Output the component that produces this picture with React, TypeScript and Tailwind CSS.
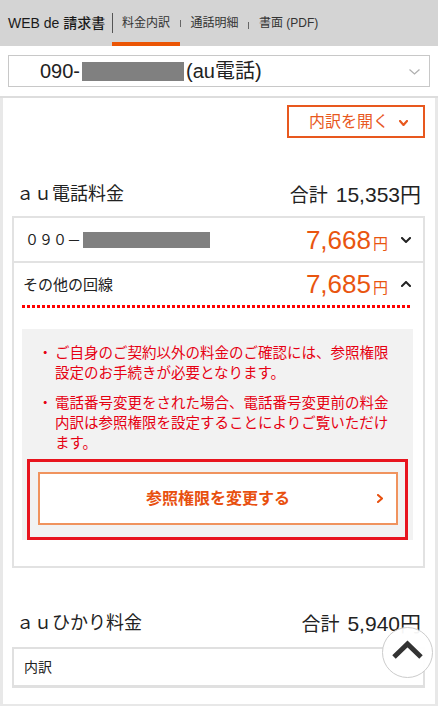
import React from "react";

function Chevron({ dir, className, color, w = 10, h = 6, sw = 2 }: { dir: "down" | "up" | "right"; className?: string; color: string; w?: number; h?: number; sw?: number }) {
  let d = "";
  if (dir === "down") d = `M1 1 L${w / 2} ${h - 1} L${w - 1} 1`;
  if (dir === "up") d = `M1 ${h - 1} L${w / 2} 1 L${w - 1} ${h - 1}`;
  if (dir === "right") d = `M1 1 L${w - 1} ${h / 2} L1 ${h - 1}`;
  return (
    <svg width={w} height={h} viewBox={`0 0 ${w} ${h}`} className={className}>
      <path d={d} fill="none" stroke={color} strokeWidth={sw} strokeLinecap="square" strokeLinejoin="miter" />
    </svg>
  );
}

function Total({ amount }: { amount: string }) {
  return (
    <span className="flex items-baseline leading-none">
      <span className="text-[19px]">合計</span>
      <span className="ml-[8px] text-[21px]">{amount}</span>
      <span className="text-[21px]">円</span>
    </span>
  );
}

export default function App() {
  return (
    <div className="relative h-[706px] w-[438px] overflow-hidden bg-white font-['Liberation_Sans','Noto_Sans_CJK_JP',sans-serif] text-[#222]">
      {/* header */}
      <div className="flex h-[46px] items-center bg-[#d4d4d4]">
        <div className="w-[112px] pl-2 text-[14px] font-medium leading-none text-[#1a1a1a]">WEB de 請求書</div>
        <div className="relative flex h-full w-[68px] items-center justify-center">
          <div className="absolute left-0 top-[13px] h-[20px] w-px bg-[#555]" />
          <span className="text-[12px] leading-none text-[#333]">料金内訳</span>
          <div className="absolute bottom-0 left-0 right-0 h-[4px] bg-[#eb5505]" />
        </div>
        <div className="mt-[1px] h-[7px] w-px bg-[#666]" />
        <div className="flex h-full w-[67px] items-center justify-center">
          <span className="text-[12px] leading-none text-[#333]">通話明細</span>
        </div>
        <div className="mt-[4px] h-[7px] w-px bg-[#666]" />
        <div className="flex h-full items-center pl-[10px]">
          <span className="text-[12px] leading-none text-[#333]">書面 (PDF)</span>
        </div>
      </div>

      {/* select */}
      <div className="border-b-2 border-[#dddddd] px-2 py-[9px]">
        <div className="flex h-[32px] items-center border border-[#c8c8c8] pl-[31px] pr-[9px]">
          <span className="text-[20px] leading-none text-[#222]">090-</span>
          <span className="ml-[2px] h-[19px] w-[102px] bg-[#808080]" />
          <span className="ml-[2px] text-[20px] leading-none text-[#222]">(au電話)</span>
          <Chevron dir="down" color="#b0b0b0" w={11} h={6} sw={1.3} className="ml-auto mt-[2px]" />
        </div>
      </div>

      {/* main */}
      <div className="border-x-[3px] border-b-2 border-[#e8e8e8] pb-[16px] pl-[9px] pr-[10px] pt-[7px]">
        <div className="flex justify-end">
          <div className="flex h-[33px] w-[138px] items-center justify-end border-2 border-[#e8581e] pr-[15px]">
            <span className="text-[16px] leading-none text-[#e8581e]">内訳を開く</span>
            <Chevron dir="down" color="#e8581e" w={9} h={6} sw={2.2} className="ml-[10px] mt-[2px]" />
          </div>
        </div>

        <div className="mb-[10px] mt-[44px] flex h-[24px] items-center justify-between px-[4px]">
          <span className="text-[18px] leading-none">ａｕ電話料金</span>
          <Total amount="15,353" />
        </div>

        {/* card 1 */}
        <div className="border-2 border-[#e2e2e2] pb-[26px]">
          <div className="flex h-[45px] items-center border-b-2 border-[#e2e2e2] pl-[11px] pr-[12px]">
            <span className="text-[14px] leading-none">０９０－</span>
            <span className="ml-[2px] h-[16px] w-[127px] bg-[#808080]" />
            <div className="ml-auto flex items-baseline text-[#e9550f]">
              <span className="text-[26px] leading-none">7,668</span>
              <span className="ml-[2px] text-[15px] leading-none">円</span>
            </div>
            <Chevron dir="down" color="#222" w={10} h={6} sw={2} className="ml-[13px]" />
          </div>
          <div className="flex h-[42px] items-center pl-[9px] pr-[12px]">
            <span className="text-[15px] leading-none">その他の回線</span>
            <div className="ml-auto flex items-baseline text-[#e9550f]">
              <span className="text-[26px] leading-none">7,685</span>
              <span className="ml-[2px] text-[15px] leading-none">円</span>
            </div>
            <Chevron dir="up" color="#222" w={10} h={6} sw={2} className="ml-[13px]" />
          </div>
          <div className="ml-[8px] mr-[11px] h-[3px] bg-[repeating-linear-gradient(to_right,#ff0000_0px,#ff0000_3px,transparent_3px,transparent_5px)]" />

          <div className="ml-[8px] mr-[10px] mt-[21px] bg-[#f2f2f2] pt-[14px]">
            <div className="pl-[16px] pr-[16px] text-[14.5px] leading-[20px] text-[#e60012]">
              <div className="flex">
                <span className="w-[17px] shrink-0">・</span>
                <span>ご自身のご契約以外の料金のご確認には、参照権限設定のお手続きが必要となります。</span>
              </div>
              <div className="mt-[10px] flex">
                <span className="w-[17px] shrink-0">・</span>
                <span>電話番号変更をされた場合、電話番号変更前の料金内訳は参照権限を設定することによりご覧いただけます。</span>
              </div>
            </div>
            <div className="mx-[5px] mt-[6px] border-[3px] border-[#e8141e] pb-[12px] pl-[8px] pr-[7px] pt-[10px]">
              <div className="relative flex h-[53px] items-center justify-center border-2 border-[#f0935e] bg-white">
                <span className="text-[16px] font-bold leading-none text-[#e8500f]">参照権限を変更する</span>
                <Chevron dir="right" color="#e8500f" w={6} h={9} sw={2} className="absolute right-[13px] top-[20px]" />
              </div>
            </div>
          </div>
        </div>

        <div className="mb-[12px] mt-[43px] flex h-[24px] items-center justify-between px-[4px]">
          <span className="text-[18px] leading-none">ａｕひかり料金</span>
          <Total amount="5,940" />
        </div>

        {/* card 2 */}
        <div className="flex h-[41px] items-center border-2 border-b-[3px] border-[#e0e0e0] pl-[10px]">
          <span className="text-[14px] leading-none">内訳</span>
        </div>
      </div>

      {/* scroll top */}
      <div className="absolute left-[382px] top-[627px] flex h-[51px] w-[51px] items-center justify-center rounded-full border border-[#cccccc] bg-white/95">
        <svg width="51" height="51" viewBox="0 0 51 51" className="absolute left-[-1px] top-[-1px]">
          <path d="M12 30 L25.5 17 L39 30" fill="none" stroke="#333" strokeWidth="5" strokeLinecap="butt" strokeLinejoin="miter" />
        </svg>
      </div>
    </div>
  );
}
